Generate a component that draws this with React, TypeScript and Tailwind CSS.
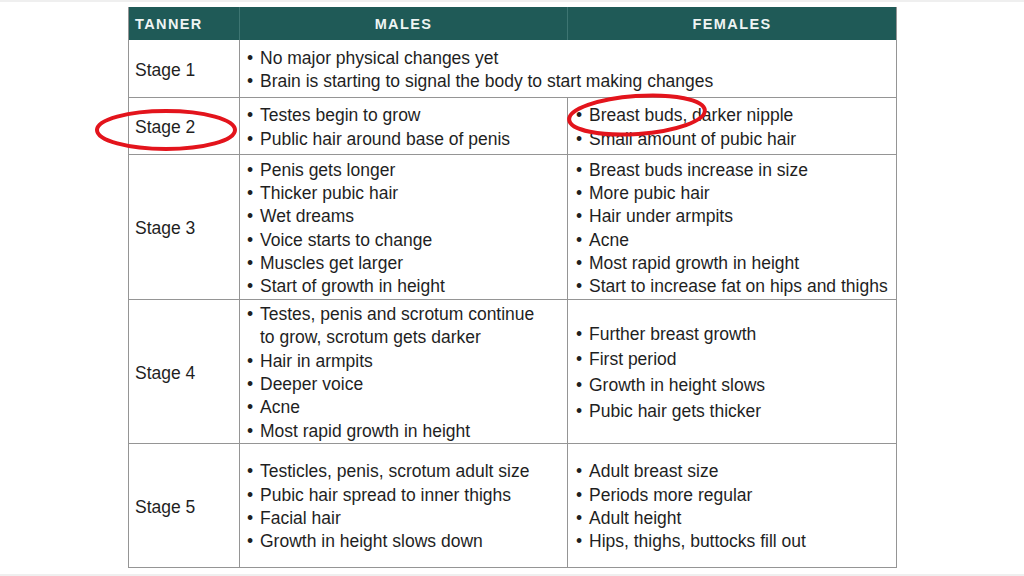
import React from "react";

type Row = {
  label: string;
  height: string;
  males: string[];
  females?: string[];
  femaleLeading?: string;
  span?: boolean;
};

const rows: Row[] = [
  {
    label: "Stage 1",
    height: "h-[58px]",
    males: ["No major physical changes yet", "Brain is starting to signal the body to start making changes"],
    span: true,
  },
  {
    label: "Stage 2",
    height: "h-[57px]",
    males: ["Testes begin to grow", "Public hair around base of penis"],
    females: ["Breast buds, darker nipple", "Small amount of pubic hair"],
  },
  {
    label: "Stage 3",
    height: "h-[145px]",
    males: [
      "Penis gets longer",
      "Thicker pubic hair",
      "Wet dreams",
      "Voice starts to change",
      "Muscles get larger",
      "Start of growth in height",
    ],
    females: [
      "Breast buds increase in size",
      "More pubic hair",
      "Hair under armpits",
      "Acne",
      "Most rapid growth in height",
      "Start to increase fat on hips and thighs",
    ],
  },
  {
    label: "Stage 4",
    height: "h-[144px]",
    males: [
      "Testes, penis and scrotum continue\nto grow, scrotum gets darker",
      "Hair in armpits",
      "Deeper voice",
      "Acne",
      "Most rapid growth in height",
    ],
    females: ["Further breast growth", "First period", "Growth in height slows", "Pubic hair gets thicker"],
    femaleLeading: "leading-[25.7px]",
  },
  {
    label: "Stage 5",
    height: "h-[124px]",
    males: [
      "Testicles, penis, scrotum adult size",
      "Pubic hair spread to inner thighs",
      "Facial hair",
      "Growth in height slows down",
    ],
    females: ["Adult breast size", "Periods more regular", "Adult height", "Hips, thighs, buttocks fill out"],
  },
];

const Bullets = ({ items, leading = "leading-[23.3px]" }: { items: string[]; leading?: string }) => (
  <ul className={`flex flex-col ${leading}`}>
    {items.map((item) => (
      <li key={item} className="flex">
        <span className="w-[13px] shrink-0">•</span>
        <span className="whitespace-pre-line">{item}</span>
      </li>
    ))}
  </ul>
);

export default function App() {
  return (
    <div className="relative w-[1024px] h-[576px] bg-white border-t-2 border-b-2 border-[#efefef] font-['Liberation_Sans',Arial,sans-serif] text-[17.5px] text-[#1f1f1f]">
      <div className="ml-[128px] mt-[5px] w-[768px] grid grid-cols-[111px_328px_329px] border-l border-[#959595]">
        {/* header */}
        <div className="h-[33px] bg-[#1f5a57] flex items-center pl-[6px] pt-[2px] text-[14.5px] font-bold tracking-[1.4px] text-[#eef4f3] border-r border-[#3d7572]">
          TANNER
        </div>
        <div className="h-[33px] bg-[#1f5a57] flex items-center justify-center pt-[2px] text-[14.5px] font-bold tracking-[1.4px] text-[#eef4f3] border-r border-[#3d7572]">
          MALES
        </div>
        <div className="h-[33px] bg-[#1f5a57] flex items-center justify-center pt-[2px] text-[14.5px] font-bold tracking-[1.4px] text-[#eef4f3] border-r border-[#959595]">
          FEMALES
        </div>

        {rows.map((row) => (
          <React.Fragment key={row.label}>
            <div className={`${row.height} flex items-center pl-[6px] pt-[3px] border-r border-b border-[#959595]`}>
              {row.label}
            </div>
            <div
              className={`${row.height} ${row.span ? "col-span-2" : ""} flex flex-col justify-center pl-[7px] pt-[3px] border-r border-b border-[#959595]`}
            >
              <Bullets items={row.males} />
            </div>
            {row.females && (
              <div className={`${row.height} flex flex-col justify-center pl-[8px] pt-[3px] border-r border-b border-[#959595]`}>
                <Bullets items={row.females} leading={row.femaleLeading} />
              </div>
            )}
          </React.Fragment>
        ))}
      </div>

      {/* hand-drawn annotation circles */}
      <svg className="absolute inset-0 pointer-events-none" width="1024" height="576" viewBox="0 0 1024 576">
        <ellipse cx="166" cy="128" rx="69" ry="19" fill="none" stroke="#e3141c" strokeWidth="4" />
        <ellipse
          cx="637"
          cy="113"
          rx="68"
          ry="19"
          fill="none"
          stroke="#e3141c"
          strokeWidth="4"
          transform="rotate(-4 637 113)"
        />
      </svg>
    </div>
  );
}
